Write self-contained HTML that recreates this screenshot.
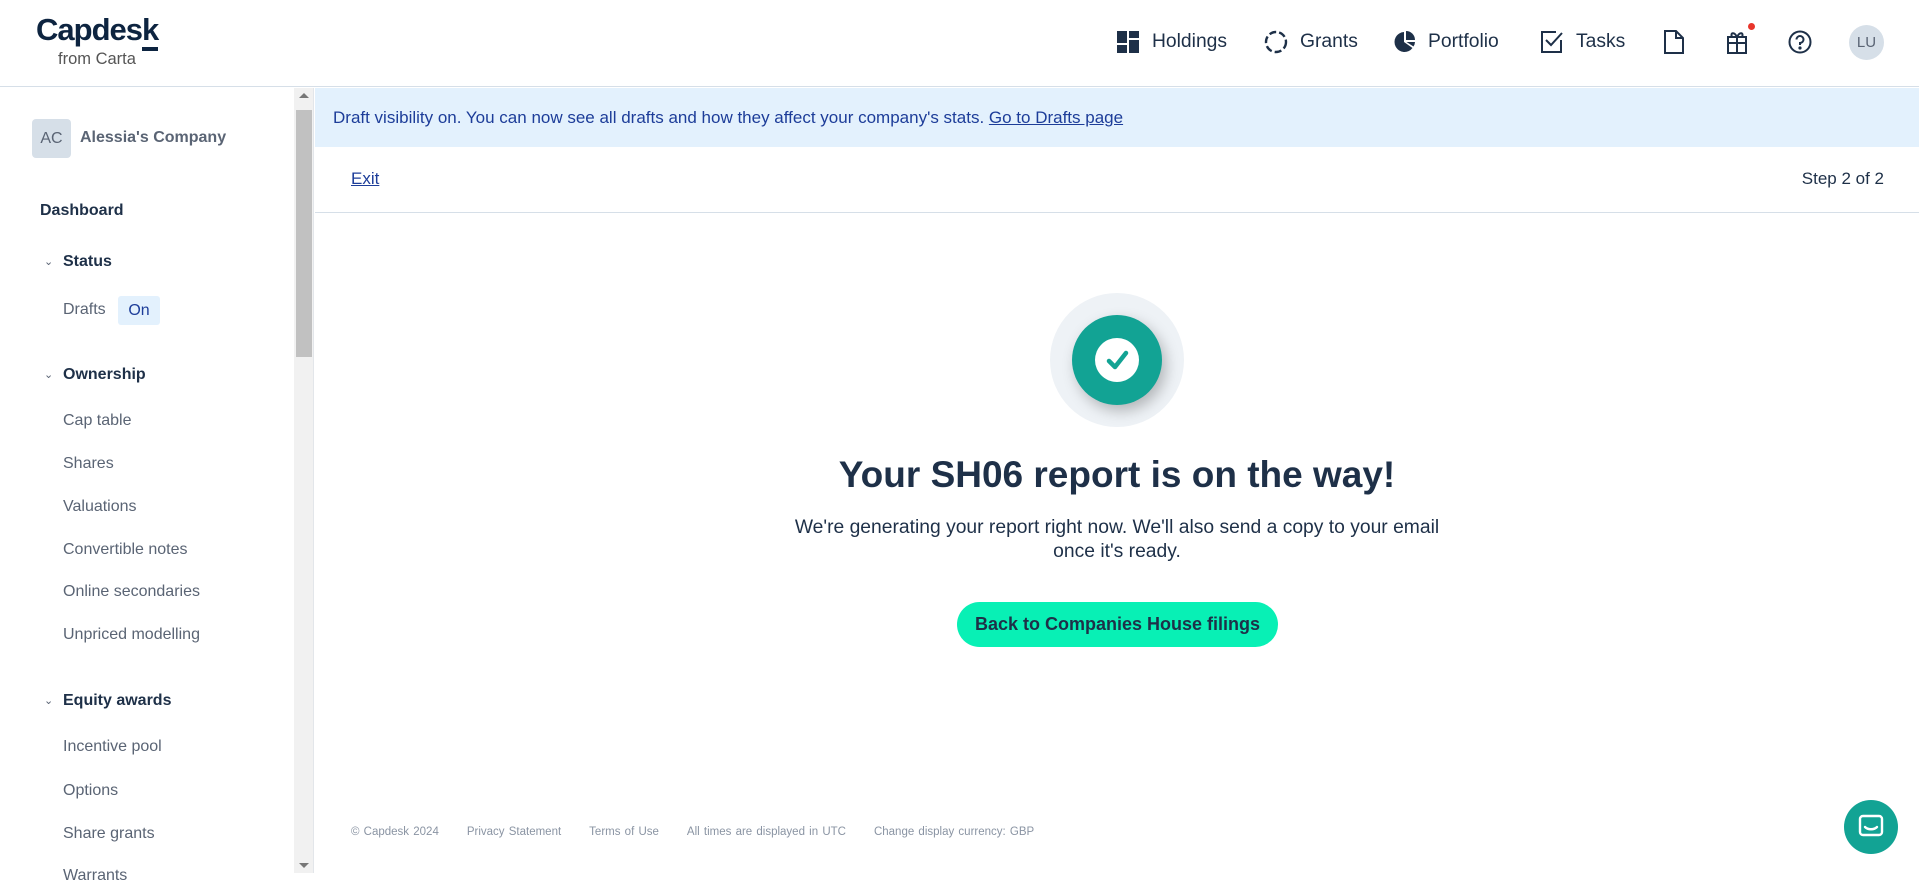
<!DOCTYPE html>
<html><head><meta charset="utf-8"><style>
*{box-sizing:border-box;margin:0;padding:0}
body{width:1919px;height:873px;overflow:hidden;font-family:"Liberation Sans",sans-serif;background:#fff;color:#1e3048;position:relative}
.hdr{position:absolute;left:0;top:0;width:1919px;height:87px;border-bottom:1px solid #d6dfe8;background:#fff}
.logo{position:absolute;left:36px;top:12px;font-size:31px;font-weight:bold;color:#0d2440;letter-spacing:-1px}
.logo u{text-decoration:none;border-bottom:4px solid #0d2440}
.from{position:absolute;left:58px;top:50px;font-size:16.5px;color:#555}
.nav{position:absolute;top:42px;transform:translateY(-50%);font-size:19.3px;color:#1e3048;display:flex;align-items:center}
.side{position:absolute;left:0;top:88px;width:294px;height:785px}
.sb{position:absolute;left:294px;top:88px;width:20px;height:785px;background:#f1f1f1;border-right:1px solid #e3e6ea}
.thumb{position:absolute;left:2px;top:22px;width:16px;height:247px;background:#c1c1c1}
.s{position:absolute;font-size:16px;color:#5a6474}
.h{position:absolute;font-size:16px;font-weight:bold;color:#1e3048}
.chev{position:absolute;left:44px;font-size:11px;color:#5a6474}
.main{position:absolute;left:315px;top:88px;width:1604px}
</style></head><body>
<div class="hdr">
<div class="logo">Capdes<u>k</u></div>
<div class="from">from Carta</div>
<div class="nav" style="left:1117px"><svg width="22" height="22" viewBox="0 0 22 22" fill="#1e3048"><rect x="0" y="0" width="10" height="12"/><rect x="12" y="0" width="10" height="7"/><rect x="12" y="9" width="10" height="13"/><rect x="0" y="14" width="10" height="8"/></svg><span style="margin-left:13px">Holdings</span></div>
<div class="nav" style="left:1264px"><svg width="24" height="24" viewBox="0 0 24 24" fill="none" stroke="#1e3048" stroke-width="2.4" stroke-dasharray="7 3"><circle cx="12" cy="12" r="10"/></svg><span style="margin-left:12px">Grants</span></div>
<div class="nav" style="left:1394px"><svg width="22" height="22" viewBox="0 0 22 22" fill="#1e3048"><path d="M10 1A10 10 0 1 0 18.5 17L10 11Z"/><path d="M12 0V9H21A9 9 0 0 0 12 0Z"/><path d="M12.5 11H21A9 9 0 0 1 19.5 15.5Z"/></svg><span style="margin-left:12px">Portfolio</span></div>
<div class="nav" style="left:1541px"><svg width="22" height="22" viewBox="0 0 22 22" fill="none" stroke="#1e3048" stroke-width="2"><path d="M20 9V21H1V1H15"/><path d="M5 9L10 14L21 2"/></svg><span style="margin-left:13px">Tasks</span></div>
<div class="nav" style="left:1664px"><svg width="20" height="24" viewBox="0 0 20 24" fill="none" stroke="#1e3048" stroke-width="2"><path d="M1 1H12L19 8V23H1Z"/><path d="M12 1V8H19"/></svg></div>
<div class="nav" style="left:1726px"><svg width="22" height="24" viewBox="0 0 22 24" fill="none" stroke="#1e3048" stroke-width="2"><rect x="2" y="7" width="18" height="16"/><path d="M2 13H20M11 7V23M11 7C8 1 4 3 6 7M11 7C14 1 18 3 16 7"/></svg></div>
<div style="position:absolute;left:1748px;top:23px;width:7px;height:7px;border-radius:50%;background:#e8352b"></div>
<div class="nav" style="left:1788px"><svg width="24" height="24" viewBox="0 0 24 24" fill="none" stroke="#1e3048" stroke-width="2"><circle cx="12" cy="12" r="10.5"/><path d="M8.5 9.5A3.5 3.5 0 1 1 12 13V15"/><circle cx="12" cy="18" r="0.6" fill="#1e3048"/></svg></div>
<div style="position:absolute;left:1849px;top:25px;width:35px;height:35px;border-radius:50%;background:#d6dfe8;color:#5a6474;font-size:15px;text-align:center;line-height:35px">LU</div>
</div>

<div class="side">
<div style="position:absolute;left:32px;top:31px;width:39px;height:39px;border-radius:4px;background:#d6dfe8;color:#5a6474;font-size:16px;text-align:center;line-height:39px">AC</div>
<div class="s" style="left:80px;top:41px;font-weight:bold">Alessia's Company</div>
<div class="h" style="left:40px;top:114px">Dashboard</div>
<div class="chev" style="top:167px">&#8964;</div><div class="h" style="left:63px;top:165px">Status</div>
<div class="s" style="left:63px;top:213px">Drafts</div>
<div style="position:absolute;left:118px;top:208px;width:42px;height:29px;background:#e3f1fd;border-radius:3px;color:#1d3d99;font-size:16px;text-align:center;line-height:29px">On</div>
<div class="chev" style="top:280px">&#8964;</div><div class="h" style="left:63px;top:278px">Ownership</div>
<div class="s" style="left:63px;top:324px">Cap table</div>
<div class="s" style="left:63px;top:367px">Shares</div>
<div class="s" style="left:63px;top:410px">Valuations</div>
<div class="s" style="left:63px;top:453px">Convertible notes</div>
<div class="s" style="left:63px;top:495px">Online secondaries</div>
<div class="s" style="left:63px;top:538px">Unpriced modelling</div>
<div class="chev" style="top:606px">&#8964;</div><div class="h" style="left:63px;top:604px">Equity awards</div>
<div class="s" style="left:63px;top:650px">Incentive pool</div>
<div class="s" style="left:63px;top:694px">Options</div>
<div class="s" style="left:63px;top:737px">Share grants</div>
<div class="s" style="left:63px;top:779px">Warrants</div>
</div>
<div class="sb"><div style="position:absolute;left:5px;top:5px;border:5px solid transparent;border-bottom:5px solid #777;border-top:0"></div><div class="thumb"></div><div style="position:absolute;left:5px;bottom:5px;border:5px solid transparent;border-top:5px solid #777;border-bottom:0"></div></div>

<div class="main">
<div style="height:59px;background:#e3f1fd;padding-left:18px;line-height:59px;font-size:17px;color:#1d3d99">Draft visibility on. You can now see all drafts and how they affect your company's stats. <u>Go to Drafts page</u></div>
<div style="height:66px;border-bottom:1px solid #d6dfe8;position:relative;font-size:17px">
<u style="position:absolute;left:36px;top:22px;color:#1d3d99">Exit</u>
<span style="position:absolute;right:35px;top:22px;color:#1e3048">Step 2 of 2</span></div>
</div>
<div style="position:absolute;left:1050px;top:293px;width:134px;height:134px;border-radius:50%;background:#eef2f6"></div>
<div style="position:absolute;left:1072px;top:315px;width:90px;height:90px;border-radius:50%;background:#12a394;box-shadow:4px 6px 14px rgba(0,0,0,.25)"></div>
<div style="position:absolute;left:1095px;top:338px;width:44px;height:44px;border-radius:50%;background:#fff"></div>
<svg style="position:absolute;left:1095px;top:338px" width="44" height="44" viewBox="0 0 44 44"><path d="M14 23L20 29L31 15" fill="none" stroke="#12a394" stroke-width="4.5" stroke-linecap="round" stroke-linejoin="round"/></svg>
<div style="position:absolute;left:315px;width:1604px;top:454px;text-align:center;font-size:37px;font-weight:bold;color:#1e3048">Your SH06 report is on the way!</div>
<div style="position:absolute;left:315px;width:1604px;top:516px;text-align:center;font-size:19.3px;line-height:24px;color:#1e3048">We're generating your report right now. We'll also send a copy to your email<br>once it's ready.</div>
<div style="position:absolute;left:957px;top:602px;width:321px;height:45px;border-radius:23px;background:#08f0b5;text-align:center;line-height:45px;font-size:18px;font-weight:bold;color:#1e3048">Back to Companies House filings</div>
<div style="position:absolute;left:351px;top:826px;font-size:11.5px;color:#8a94a3;word-spacing:1px;white-space:nowrap">© Capdesk 2024<span style="margin-left:28px">Privacy Statement</span><span style="margin-left:28px">Terms of Use</span><span style="margin-left:28px">All times are displayed in UTC</span><span style="margin-left:28px">Change display currency: GBP</span></div>
<div style="position:absolute;left:1844px;top:800px;width:54px;height:54px;border-radius:50%;background:#12a394"></div>
<svg style="position:absolute;left:1856px;top:812px" width="30" height="30" viewBox="0 0 30 30" fill="none" stroke="#fff" stroke-width="2.4"><path d="M7 4H23A3 3 0 0 1 26 7V20A3 3 0 0 1 23 23H7A3 3 0 0 1 4 20V7A3 3 0 0 1 7 4Z"/><path d="M9 15C12 18 18 18 21 15" stroke-linecap="round"/></svg>
</body></html>
